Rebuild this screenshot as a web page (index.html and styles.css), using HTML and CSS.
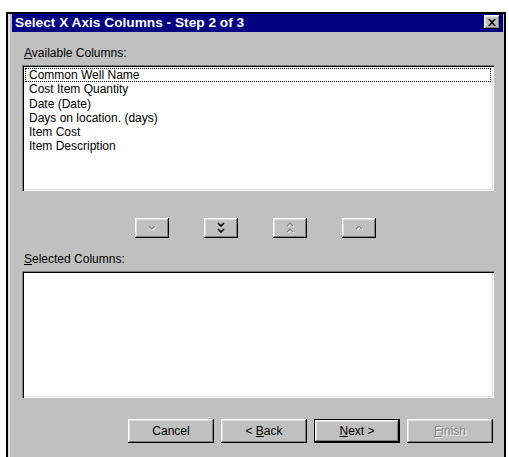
FILE: index.html
```html
<!DOCTYPE html>
<html lang="en">
<head>
<meta charset="utf-8">
<title>Select X Axis Columns</title>
<link rel="stylesheet" href="styles.css">
</head>
<body>
<div class="window">
  <div class="titlebar">
    <span class="title">Select X Axis Columns - Step 2 of 3</span>
    <button class="close" aria-label="Close">
      <svg width="8" height="7" viewBox="0 0 8 7"><path d="M0 0h2l2 2.2L6 0h2L5 3.5 8 7H6L4 4.8 2 7H0l3-3.5z" fill="#000"/></svg>
    </button>
  </div>
  <div class="content">
    <div class="label"><u>A</u>vailable Columns:</div>
    <ul class="listbox list-available">
      <li class="focused">Common Well Name</li>
      <li>Cost Item Quantity</li>
      <li>Date (Date)</li>
      <li>Days on location. (days)</li>
      <li>Item Cost</li>
      <li>Item Description</li>
    </ul>
    <div class="movers">
      <button class="mover disabled" aria-label="Add">
        <svg width="7" height="5" viewBox="0 0 7 5"><path class="hi" d="M1 1l3 3 3-3" /><path d="M0 0l3 3 3-3" /></svg>
      </button>
      <button class="mover" aria-label="Add all">
        <svg width="8" height="12" viewBox="0 0 8 12"><path d="M1 1l3 3 3-3M1 7l3 3 3-3" /></svg>
      </button>
      <button class="mover disabled" aria-label="Remove all">
        <svg width="8" height="12" viewBox="0 0 8 12"><path class="hi" d="M2 5l3-3 3 3M2 11l3-3 3 3" /><path d="M1 4l3-3 3 3M1 10l3-3 3 3" /></svg>
      </button>
      <button class="mover disabled" aria-label="Remove">
        <svg width="7" height="5" viewBox="0 0 7 5"><path class="hi" d="M1 4l3-3 3 3" /><path d="M0 3l3-3 3 3" /></svg>
      </button>
    </div>
    <div class="label"><u>S</u>elected Columns:</div>
    <ul class="listbox list-selected"></ul>
    <div class="actions">
      <button class="btn">Cancel</button>
      <button class="btn">&lt; <u>B</u>ack</button>
      <button class="btn default"><u>N</u>ext &gt;</button>
      <button class="btn disabled"><u>F</u>inish</button>
    </div>
  </div>
</div>
</body>
</html>
```

FILE: styles.css
```css
html, body {
  margin: 0;
  background: #fff;
}

body {
  font-family: "Liberation Sans", Arial, sans-serif;
  font-size: 12px;
  color: #000;
}

.window {
  box-sizing: border-box;
  margin: 12px 0 0 6px;
  width: 500px;
  height: 445px;
  border: 2px solid #000;
  border-bottom: 0;
  background: #c0c0c0;
  padding: 0 1px 0 4px;
  box-shadow: inset 2px 0 0 #dfdfdf;
}

/* caption bar */
.titlebar {
  display: flex;
  align-items: center;
  justify-content: space-between;
  height: 18px;
  background: #000080;
  padding: 0 3px 0 3px;
}

.title {
  color: #fff;
  font-weight: bold;
  font-size: 13.7px;
  line-height: 18px;
  white-space: nowrap;
}

.close {
  display: flex;
  align-items: center;
  justify-content: center;
  width: 16px;
  height: 14px;
  padding: 0;
  margin-top: -2px;
  border: 0;
  background: #c0c0c0;
  box-shadow: inset -1px -1px #000, inset 1px 1px #fff, inset -2px -2px #808080, inset 2px 2px #dfdfdf;
}

.content {
  padding: 14px 9px 0 10px;
}

.label {
  line-height: 14px;
  padding-left: 2px;
  white-space: nowrap;
}

/* sunken list boxes */
.listbox {
  box-sizing: border-box;
  list-style: none;
  margin: 5px 0 0 0;
  padding: 3px 2px 2px 2px;
  background: #fff;
  box-shadow: inset 1px 1px #808080, inset 2px 2px #000, inset -1px -1px #fff, inset -2px -2px #dfdfdf;
}

.list-available {
  height: 126px;
}

.list-selected {
  height: 127px;
}

.listbox li {
  line-height: 14.3px;
  padding-left: 3px;
  margin: 0 1px;
  white-space: nowrap;
  border: 1px solid transparent;
  border-top: 0;
  border-bottom: 0;
}

.listbox li.focused {
  outline: 1px dotted #000;
  outline-offset: -1px;
}

/* add / remove arrow buttons */
.movers {
  display: flex;
  gap: 35px;
  margin-top: 27px;
  padding-left: 113px;
  margin-bottom: 14px;
}

.mover {
  display: flex;
  align-items: center;
  justify-content: center;
  width: 34px;
  height: 20px;
  padding: 0;
  border: 0;
  background: #c0c0c0;
  box-shadow: inset -1px -1px #000, inset 1px 1px #fff, inset -2px -2px #808080, inset 2px 2px #dfdfdf;
}

.mover svg path {
  fill: none;
  stroke: #000;
  stroke-width: 1.6;
}

.mover.disabled svg path {
  stroke: #808080;
  stroke-width: 1.2;
}

.mover.disabled svg path.hi {
  stroke: #fff;
}

/* wizard navigation */
.actions {
  display: flex;
  justify-content: flex-end;
  gap: 7px;
  margin-top: 21px;
  padding-right: 1px;
}

.btn {
  box-sizing: border-box;
  width: 86px;
  height: 24px;
  padding: 0;
  border: 0;
  background: #c0c0c0;
  font-family: "Liberation Sans", Arial, sans-serif;
  font-size: 12px;
  color: #000;
  box-shadow: inset -1px -1px #000, inset 1px 1px #fff, inset -2px -2px #808080, inset 2px 2px #dfdfdf;
}

.btn.default {
  box-shadow: inset 0 0 0 1px #000, inset -2px -2px #000, inset 2px 2px #fff, inset -3px -3px #808080, inset 3px 3px #dfdfdf;
}

.btn.disabled {
  color: #808080;
  text-shadow: 1px 1px 0 #fff;
}
```
